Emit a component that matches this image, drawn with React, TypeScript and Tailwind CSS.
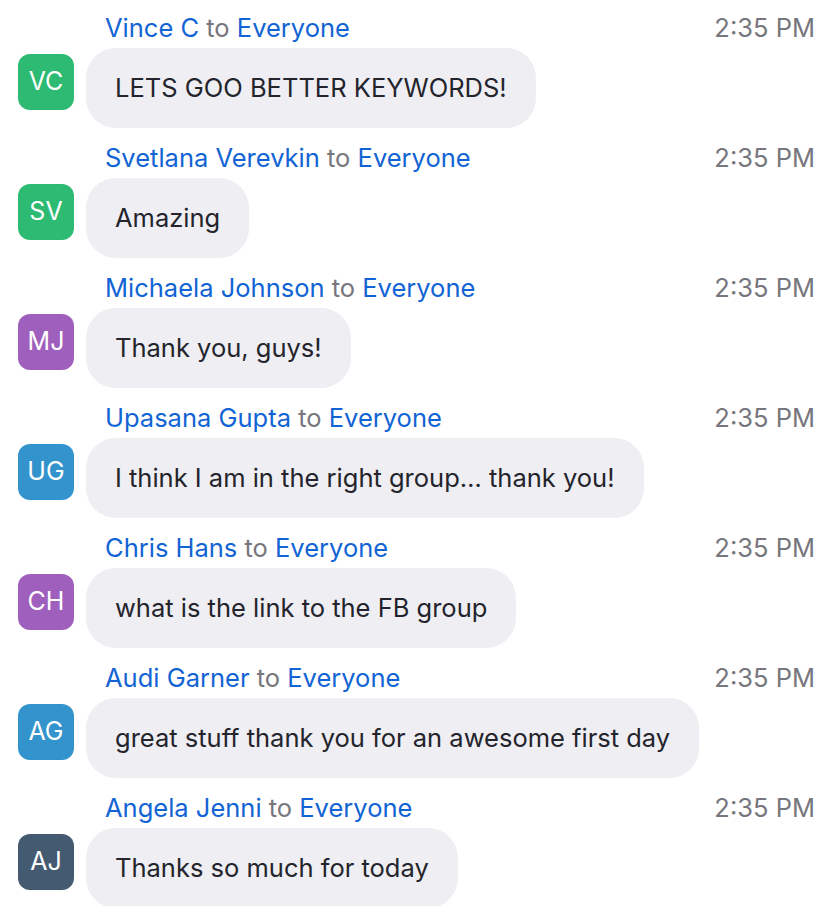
const messages = [
  { initials: "VC", name: "Vince C", color: "bg-[#2dba72]", text: "LETS GOO BETTER KEYWORDS!" },
  { initials: "SV", name: "Svetlana Verevkin", color: "bg-[#2dba72]", text: "Amazing" },
  { initials: "MJ", name: "Michaela Johnson", color: "bg-[#9f5fbd]", text: "Thank you, guys!" },
  { initials: "UG", name: "Upasana Gupta", color: "bg-[#3393cc]", text: "I think I am in the right group… thank you!" },
  { initials: "CH", name: "Chris Hans", color: "bg-[#9f5fbd]", text: "what is the link to the FB group" },
  { initials: "AG", name: "Audi Garner", color: "bg-[#3393cc]", text: "great stuff thank you for an awesome first day" },
  { initials: "AJ", name: "Angela Jenni", color: "bg-[#445a71]", text: "Thanks so much for today" },
];

const App = () => {
  return (
    <div
      className="w-[834px] h-[906px] overflow-hidden bg-white pt-[14px]"
      style={{ fontFamily: 'Inter, "Liberation Sans", Arial, sans-serif' }}
    >
      <div className="flex flex-col gap-[16px]">
        {messages.map((m) => (
          <div key={m.initials} className="flex flex-col gap-[6px]">
            {/* header */}
            <div className="flex items-center justify-between pl-[105px] pr-[19px] h-[28px] text-[25.5px] leading-[28px]">
              <div>
                <span className="text-[#1264d4]">{m.name}</span>
                <span className="text-[#77767d]"> to </span>
                <span className="text-[#1264d4]">Everyone</span>
              </div>
              <span className="text-[#77767d]">2:35 PM</span>
            </div>
            {/* body */}
            <div className="flex items-start gap-[12px] pl-[18px]">
              <div
                className={`${m.color} mt-[6px] w-[56px] h-[56px] rounded-[12px] flex items-center justify-center text-white text-[25px] shrink-0`}
              >
                {m.initials}
              </div>
              <div className="h-[80px] flex items-center px-[29px] rounded-[30px] bg-[#eeeef3] text-[#24242c] text-[25.5px]">
                {m.text}
              </div>
            </div>
          </div>
        ))}
      </div>
    </div>
  );
};

export default App;
